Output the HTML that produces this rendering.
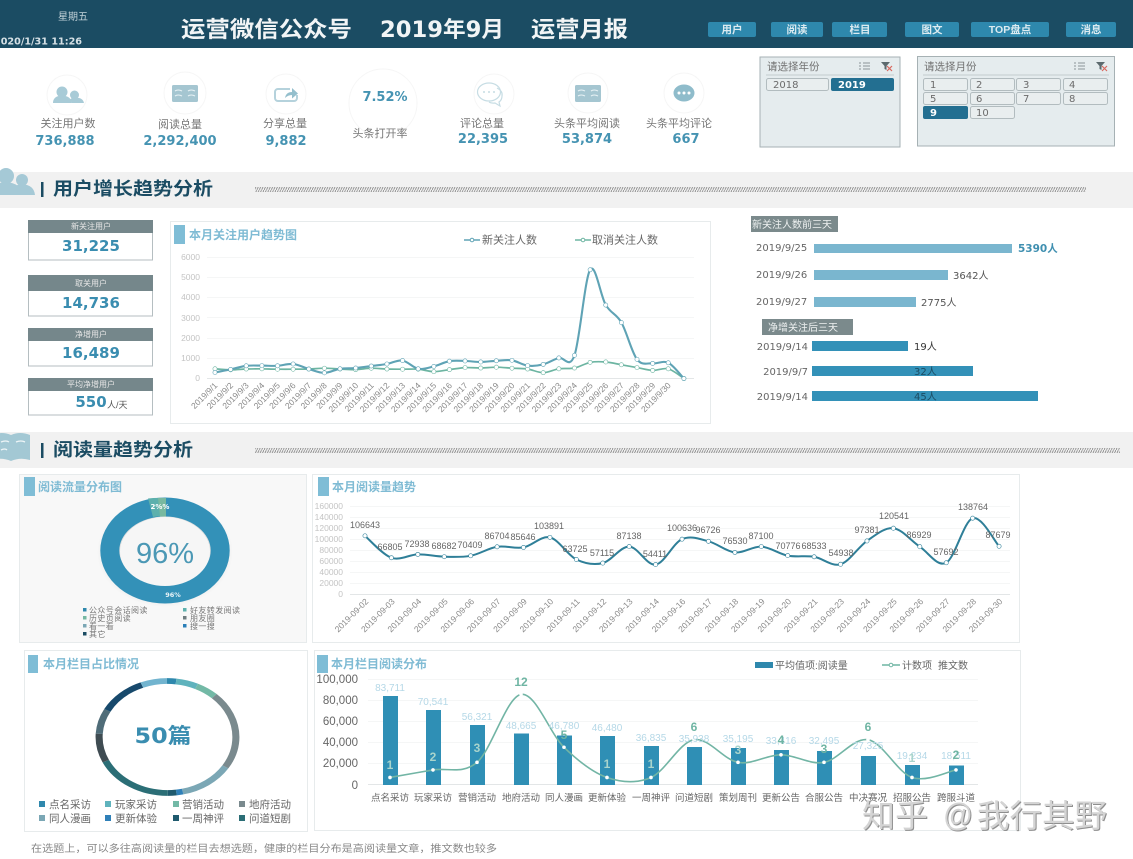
<!DOCTYPE html>
<html lang="zh"><head><meta charset="utf-8"><title>运营月报</title>
<style>
html,body{margin:0;padding:0;background:#fff;width:1133px;height:859px;overflow:hidden}
svg{display:block;filter:blur(.35px)}
text{font-family:"DejaVu Sans","Noto Sans CJK SC",sans-serif}
.cn{font-family:"Liberation Sans","Noto Sans CJK SC",sans-serif}
.lab{font-family:"Liberation Sans","Noto Sans CJK SC",sans-serif;font-size:11px;fill:#777;text-anchor:middle}
.val{font-size:13px;font-weight:bold;fill:#4593b2;text-anchor:middle}
.btn{font-family:"Liberation Sans","Noto Sans CJK SC",sans-serif;font-size:10.5px;font-weight:bold;fill:#dcebf1;text-anchor:middle}
.sec{font-family:"Liberation Sans","Noto Sans CJK SC",sans-serif;font-size:18px;font-weight:bold;fill:#1b4c63}
.pt{font-family:"Liberation Sans","Noto Sans CJK SC",sans-serif;font-size:12px;font-weight:bold;fill:#7fbbd4}
.kh{font-family:"Liberation Sans","Noto Sans CJK SC",sans-serif;font-size:8px;fill:#e6e6e6;text-anchor:middle}
.kv{font-size:15px;font-weight:bold;fill:#3a8db0;text-anchor:middle}
.ax{font-family:"Liberation Sans",sans-serif;font-size:8.5px;fill:#c4c4c4;text-anchor:end}
.rl{font-family:"Liberation Sans",sans-serif;font-size:8.5px;fill:#8a8a8a;text-anchor:end}
.d2{font-family:"Liberation Sans",sans-serif;font-size:9px;fill:#666;text-anchor:middle}
.sb{font-size:9.5px;fill:#666}
.rb{font-size:10px;fill:#666}
.rv{font-size:10px;fill:#555}
.lg8{font-family:"Liberation Sans","Noto Sans CJK SC",sans-serif;font-size:8px;fill:#777}
.lg11{font-family:"Liberation Sans","Noto Sans CJK SC",sans-serif;font-size:10.5px;fill:#666}
.v5{font-family:"Liberation Sans",sans-serif;font-size:10px;fill:#b5d8e7;text-anchor:middle}
.c5{font-family:"Liberation Sans",sans-serif;font-size:12px;font-weight:bold;fill:#6fb5a3;text-anchor:middle}
.x5{font-family:"Liberation Sans","Noto Sans CJK SC",sans-serif;font-size:9.5px;fill:#666;text-anchor:middle}
.y5{font-family:"Liberation Sans",sans-serif;font-size:11.5px;fill:#666;text-anchor:end}
.wm{font-family:"Liberation Sans","Noto Sans CJK SC",sans-serif;font-size:32px;fill:#d4d4d4;filter:drop-shadow(1px 1px 0 #8f8f8f)}
</style></head><body>
<svg width="1133" height="859" viewBox="0 0 1133 859" xmlns="http://www.w3.org/2000/svg">
<defs>
<pattern id="h" patternUnits="userSpaceOnUse" width="2.4" height="5"><path d="M0 5L2.4 0" stroke="#7a7a7a" stroke-width=".8"/></pattern>
<radialGradient id="sh" cx=".5" cy=".5" r=".5"><stop offset=".72" stop-color="#ddd"/><stop offset="1" stop-color="#f8f8f8"/></radialGradient>
</defs>
<rect width="1133" height="859" fill="#fff"/>

<!-- header -->
<rect width="1133" height="48" fill="#1b4c63"/>
<text x="58" y="20" class="cn" font-size="10" fill="#c2d2d9">星期五</text>
<text x="-6" y="44.500" font-size="9.500" font-weight="bold" fill="#d5e0e5" textLength="88" lengthAdjust="spacingAndGlyphs">2020/1/31 11:26</text>
<text x="181" y="37" class="cn" font-size="22" font-weight="bold" fill="#f2f5f6" textLength="171" lengthAdjust="spacingAndGlyphs">运营微信公众号</text>
<text x="380" y="37" class="cn" font-size="22" font-weight="bold" fill="#f2f5f6" textLength="124" lengthAdjust="spacingAndGlyphs" style="font-family:'DejaVu Sans','Noto Sans CJK SC',sans-serif">2019年9月</text>
<text x="531" y="37" class="cn" font-size="22" font-weight="bold" fill="#f2f5f6" textLength="97" lengthAdjust="spacingAndGlyphs">运营月报</text>
<g fill="#2e88ad">
<rect x="708" y="22" width="48" height="15" rx="2"/><rect x="771" y="22" width="52" height="15" rx="2"/><rect x="832" y="22" width="55" height="15" rx="2"/><rect x="905" y="22" width="54" height="15" rx="2"/><rect x="971" y="22" width="78" height="15" rx="2"/><rect x="1066" y="22" width="50" height="15" rx="2"/>
</g>
<text x="732" y="33" class="btn">用户</text><text x="797" y="33" class="btn">阅读</text><text x="860" y="33" class="btn">栏目</text><text x="932" y="33" class="btn">图文</text><text x="1010" y="33" class="btn">TOP盘点</text><text x="1091" y="33" class="btn">消息</text>

<!-- KPI icons -->
<g fill="none" stroke="#f6f6f6"><circle cx="67" cy="95" r="20"/><circle cx="185" cy="93" r="21"/><circle cx="286" cy="94" r="20"/><circle cx="383" cy="103" r="34"/><circle cx="494" cy="94" r="20"/><circle cx="588" cy="93" r="20"/><circle cx="684" cy="93" r="20"/></g>
<g fill="#a8cbd7"><circle cx="62" cy="92" r="5.500"/><path d="M53 103q0-7 9-7.500q9 .5 10 7.500z"/><circle cx="74.500" cy="95" r="4.500"/><path d="M72 103q0-1-2-3.500q2-2 5-2q8 0 9 5.500z"/></g>
<g><rect x="172" y="85" width="26" height="17" rx="1.500" fill="#a5c6d1"/><path d="M175 91q3-2 7 0M175 96q3-2 7 0M188 91q3-2 7 0M188 96q3-2 7 0" stroke="#e8f2f5" stroke-width="1.100" fill="none"/></g>
<g><path d="M290 89h-12a3 3 0 0 0-3 3v6a3 3 0 0 0 3 3h16a3 3 0 0 0 3-3v-3" fill="none" stroke="#b5d2dc" stroke-width="2"/><path d="M285 98q1-6 7-6v-4l6 5.500-6 5v-3.500q-4 0-7 3z" fill="#94bfcd"/></g>
<g fill="none" stroke="#c7dde4" stroke-width="1.200"><ellipse cx="489" cy="92" rx="11.500" ry="9"/><path d="M497 88q6 3 5 8q0 4-3 6l1 4-5-3q-4 .5-6-1"/></g>
<g fill="#c7dde4"><circle cx="484" cy="92" r="1"/><circle cx="489" cy="92" r="1"/><circle cx="494" cy="92" r="1"/></g>
<g><rect x="575" y="85" width="26" height="17" rx="1.500" fill="#a5c6d1"/><path d="M578 91q3-2 7 0M578 96q3-2 7 0M591 91q3-2 7 0M591 96q3-2 7 0" stroke="#e8f2f5" stroke-width="1.100" fill="none"/></g>
<g><ellipse cx="684" cy="93" rx="10.500" ry="8.500" fill="#8fbccb"/><circle cx="679" cy="93" r="1.500" fill="#fff"/><circle cx="684" cy="93" r="1.500" fill="#fff"/><circle cx="689" cy="93" r="1.500" fill="#fff"/></g>

<text x="68" y="127" class="lab">关注用户数</text><text x="180" y="128" class="lab">阅读总量</text><text x="285" y="127" class="lab">分享总量</text><text x="380" y="137" class="lab">头条打开率</text><text x="482" y="127" class="lab">评论总量</text><text x="587" y="127" class="lab">头条平均阅读</text><text x="679" y="127" class="lab">头条平均评论</text>
<text x="65" y="145" class="val">736,888</text><text x="180" y="145" class="val">2,292,400</text><text x="286" y="145" class="val">9,882</text><text x="385" y="101" class="val">7.52%</text><text x="483" y="143" class="val">22,395</text><text x="587" y="143" class="val">53,874</text><text x="686" y="143" class="val">667</text>

<!-- slicers -->
<rect x="760" y="57" width="140" height="90" fill="#e5ecee" stroke="#a6b1b4"/>
<rect x="917.500" y="56.500" width="197" height="89.500" fill="#e5ecee" stroke="#a6b1b4"/>
<text x="767" y="70" class="cn" font-size="10.500" fill="#707070">请选择年份</text><text x="924" y="70" class="cn" font-size="10.500" fill="#707070">请选择月份</text>
<path d="M766 75h128M923 75h186" stroke="#c3cccf"/>
<path d="M859 63h2M859 66h2M859 69h2M863 63h7M863 66h7M863 69h7M1074 63h2M1074 66h2M1074 69h2M1078 63h7M1078 66h7M1078 69h7" stroke="#8a9598" fill="none"/>
<path d="M881 62h9l-3.500 4v4l-2-1v-3z" fill="#5c6a6e"/><path d="M887 66l5 5M892 66l-5 5" stroke="#d9695f" stroke-width="1.200"/>
<path d="M1096 62h9l-3.500 4v4l-2-1v-3z" fill="#5c6a6e"/><path d="M1102 66l5 5M1107 66l-5 5" stroke="#d9695f" stroke-width="1.200"/>
<g fill="#e9eeef" stroke="#b2bcbf">
<rect x="766.500" y="78.500" width="62" height="12" rx="2"/>
<rect x="923.500" y="78.500" width="44" height="12" rx="2"/><rect x="970.500" y="78.500" width="44" height="12" rx="2"/><rect x="1016.500" y="78.500" width="44" height="12" rx="2"/><rect x="1063.500" y="78.500" width="44" height="12" rx="2"/>
<rect x="923.500" y="92.500" width="44" height="12" rx="2"/><rect x="970.500" y="92.500" width="44" height="12" rx="2"/><rect x="1016.500" y="92.500" width="44" height="12" rx="2"/><rect x="1063.500" y="92.500" width="44" height="12" rx="2"/>
<rect x="970.500" y="106.500" width="44" height="12" rx="2"/>
</g>
<rect x="831" y="78" width="63" height="13" rx="2" fill="#236f91"/><rect x="923" y="106" width="45" height="13" rx="2" fill="#236f91"/>
<g>
<text x="773" y="88" font-size="10" fill="#6b6b6b">2018</text><text x="838" y="88" font-size="10" fill="#fff" font-weight="bold">2019</text>
<text x="930" y="88" font-size="10" fill="#6b6b6b">1</text><text x="976" y="88" font-size="10" fill="#6b6b6b">2</text><text x="1023" y="88" font-size="10" fill="#6b6b6b">3</text><text x="1069" y="88" font-size="10" fill="#6b6b6b">4</text>
<text x="930" y="102" font-size="10" fill="#6b6b6b">5</text><text x="976" y="102" font-size="10" fill="#6b6b6b">6</text><text x="1023" y="102" font-size="10" fill="#6b6b6b">7</text><text x="1069" y="102" font-size="10" fill="#6b6b6b">8</text>
<text x="930" y="116" font-size="10" fill="#fff" font-weight="bold">9</text><text x="976" y="116" font-size="10" fill="#6b6b6b">10</text>
</g>

<!-- section 1 -->
<rect y="172" width="1133" height="36" fill="#f1f1f1"/>
<g fill="#a5c9d6"><circle cx="6" cy="176" r="8"/><path d="M-10 195q0-12 16-13q15 1 16 13z"/><circle cx="22" cy="180" r="6"/><path d="M18 195q0-4-4-8q4-3 8-3q12 1 13 11z"/></g>
<rect x="41" y="182" width="2.500" height="15" fill="#1b4c63"/>
<text x="53" y="195" class="sec" textLength="160" lengthAdjust="spacingAndGlyphs">用户增长趋势分析</text>
<rect x="255" y="187" width="831" height="5" fill="url(#h)"/>

<!-- KPI boxes -->
<g fill="#fff" stroke="#b5bec1"><rect x="28.500" y="220.500" width="124" height="39.500"/><rect x="28.500" y="275.500" width="124" height="40.500"/><rect x="28.500" y="328.500" width="124" height="37.500"/><rect x="28.500" y="378.500" width="124" height="36.500"/></g>
<g fill="#75878b"><rect x="28" y="220" width="125" height="13"/><rect x="28" y="275" width="125" height="16"/><rect x="28" y="328" width="125" height="13"/><rect x="28" y="378" width="125" height="13"/></g>
<text x="91" y="229" class="kh">新关注用户</text><text x="91" y="286" class="kh">取关用户</text><text x="91" y="337" class="kh">净增用户</text><text x="91" y="387" class="kh">平均净增用户</text>
<text x="91" y="251" class="kv">31,225</text><text x="91" y="308" class="kv">14,736</text><text x="91" y="358" class="kv">16,489</text><text x="91" y="407" class="kv">550</text>
<text x="107" y="408" class="cn" font-size="9" fill="#555">人/天</text>

<!-- chart1 -->
<rect x="170.500" y="221.500" width="540" height="202" fill="#fff" stroke="#e7ebec"/>
<rect x="174" y="225" width="11" height="19" fill="#7fbdd6"/>
<text x="189" y="239" class="pt">本月关注用户趋势图</text>
<path d="M464 240h16" stroke="#5fa3b5" stroke-width="1.500"/><circle cx="472" cy="240" r="1.800" fill="#fff" stroke="#5fa3b5"/>
<path d="M575 240h16" stroke="#6db5a2" stroke-width="1.500"/><circle cx="583" cy="240" r="1.800" fill="#fff" stroke="#6db5a2"/>
<text x="482" y="243.500" class="cn" font-size="11" fill="#666">新关注人数</text><text x="592" y="243.500" class="cn" font-size="11" fill="#666">取消关注人数</text>
<g stroke="#f5f6f6"><path d="M207 257.500H694M207 277.500H694M207 297.500H694M207 317.500H694M207 338.500H694M207 358.500H694"/></g><path d="M207 378.500H694" stroke="#e3e6e7"/>
<text x="200" y="260" class="ax">6000</text><text x="200" y="280" class="ax">5000</text><text x="200" y="300" class="ax">4000</text><text x="200" y="321" class="ax">3000</text><text x="200" y="341" class="ax">2000</text><text x="200" y="361" class="ax">1000</text><text x="200" y="381" class="ax">0</text>
<g id="c1"></g>
<g>
<text class="rl" x="218" y="386" transform="rotate(-45 218 386)">2019/9/1</text><text class="rl" x="233.700" y="386" transform="rotate(-45 233.700 386)">2019/9/2</text><text class="rl" x="249.300" y="386" transform="rotate(-45 249.300 386)">2019/9/3</text><text class="rl" x="265" y="386" transform="rotate(-45 265 386)">2019/9/4</text><text class="rl" x="280.600" y="386" transform="rotate(-45 280.600 386)">2019/9/5</text><text class="rl" x="296.200" y="386" transform="rotate(-45 296.200 386)">2019/9/6</text><text class="rl" x="311.900" y="386" transform="rotate(-45 311.900 386)">2019/9/7</text><text class="rl" x="327.500" y="386" transform="rotate(-45 327.500 386)">2019/9/8</text><text class="rl" x="343.100" y="386" transform="rotate(-45 343.100 386)">2019/9/9</text><text class="rl" x="358.800" y="386" transform="rotate(-45 358.800 386)">2019/9/10</text><text class="rl" x="374.400" y="386" transform="rotate(-45 374.400 386)">2019/9/11</text><text class="rl" x="390" y="386" transform="rotate(-45 390 386)">2019/9/12</text><text class="rl" x="405.700" y="386" transform="rotate(-45 405.700 386)">2019/9/13</text><text class="rl" x="421.300" y="386" transform="rotate(-45 421.300 386)">2019/9/14</text><text class="rl" x="436.900" y="386" transform="rotate(-45 436.900 386)">2019/9/15</text><text class="rl" x="452.600" y="386" transform="rotate(-45 452.600 386)">2019/9/16</text><text class="rl" x="468.200" y="386" transform="rotate(-45 468.200 386)">2019/9/17</text><text class="rl" x="483.800" y="386" transform="rotate(-45 483.800 386)">2019/9/18</text><text class="rl" x="499.500" y="386" transform="rotate(-45 499.500 386)">2019/9/19</text><text class="rl" x="515.100" y="386" transform="rotate(-45 515.100 386)">2019/9/20</text><text class="rl" x="530.700" y="386" transform="rotate(-45 530.700 386)">2019/9/21</text><text class="rl" x="546.400" y="386" transform="rotate(-45 546.400 386)">2019/9/22</text><text class="rl" x="562" y="386" transform="rotate(-45 562 386)">2019/9/23</text><text class="rl" x="577.600" y="386" transform="rotate(-45 577.600 386)">2019/9/24</text><text class="rl" x="593.300" y="386" transform="rotate(-45 593.300 386)">2019/9/25</text><text class="rl" x="608.900" y="386" transform="rotate(-45 608.900 386)">2019/9/26</text><text class="rl" x="624.500" y="386" transform="rotate(-45 624.500 386)">2019/9/27</text><text class="rl" x="640.200" y="386" transform="rotate(-45 640.200 386)">2019/9/28</text><text class="rl" x="655.800" y="386" transform="rotate(-45 655.800 386)">2019/9/29</text><text class="rl" x="671.400" y="386" transform="rotate(-45 671.400 386)">2019/9/30</text>
</g>

<!-- right bars -->
<rect x="751" y="216" width="87" height="16" fill="#7b8a8c"/>
<text x="752" y="228" class="cn" font-size="10" fill="#eef1f1">新关注人数前三天</text>
<g fill="#7ab6cf"><rect x="814" y="244" width="198" height="9"/><rect x="814" y="270" width="134" height="10"/><rect x="814" y="297" width="102" height="10"/></g>
<text x="756" y="251" class="rb">2019/9/25</text><text x="756" y="278" class="rb">2019/9/26</text><text x="756" y="305" class="rb">2019/9/27</text>
<text x="1018" y="252" font-size="10.500" font-weight="bold" fill="#3f8fb0">5390人</text><text x="953" y="279" class="rv">3642人</text><text x="921" y="306" class="rv">2775人</text>
<rect x="762" y="319" width="91" height="16" fill="#7b8a8c"/>
<text x="768" y="331" class="cn" font-size="10" fill="#eef1f1">净增关注后三天</text>
<g fill="#3391b8"><rect x="812" y="341" width="96" height="10"/><rect x="812" y="366" width="161" height="10"/><rect x="812" y="391" width="226" height="10"/></g>
<text x="808" y="350" class="rb" text-anchor="end">2019/9/14</text><text x="808" y="375" class="rb" text-anchor="end">2019/9/7</text><text x="808" y="400" class="rb" text-anchor="end">2019/9/14</text>
<text x="914" y="350" class="rv" style="fill:#333">19人</text><text x="914" y="375" class="rv" style="fill:#1b4c63">32人</text><text x="914" y="400" class="rv" style="fill:#1b4c63">45人</text>

<!-- section 2 -->
<rect y="432" width="1133" height="36" fill="#f1f1f1"/>
<path d="M-8 435q10-4 19 0q9-4 19 0v25q-10-3-19 1q-9-4-19-1z" fill="#a3c8d4"/><path d="M1 442q5-2 8 0M16 442q5-2 9 0M1 450q4-2 6 0" stroke="#eef5f7" stroke-width="1.300" fill="none"/>
<rect x="41" y="443" width="2.500" height="15" fill="#1b4c63"/>
<text x="53" y="456" class="sec" textLength="140" lengthAdjust="spacingAndGlyphs">阅读量趋势分析</text>
<rect x="255" y="448" width="865" height="5" fill="url(#h)"/>

<!-- donut panel -->
<rect x="19.500" y="474.500" width="287" height="168" fill="#f8f8f8" stroke="#e7ebec"/>
<rect x="24" y="477" width="11" height="19" fill="#7fbdd6"/>
<text x="38" y="491" class="pt">阅读流量分布图</text>
<ellipse cx="165" cy="552" rx="68" ry="55" fill="url(#sh)"/>
<ellipse cx="165" cy="550.500" rx="55.200" ry="43.500" fill="none" stroke="#3391b8" stroke-width="19"/>
<path d="M148 498.500Q156 497.500 163 498L166 516Q158 516 153 517z" fill="#5db0ad"/>
<path d="M158 498Q162 497.700 166 498L166 516.500 160 516.500z" fill="#78b9a0"/>
<ellipse cx="165" cy="551.500" rx="45" ry="34.500" fill="#f6f6f6"/>
<text x="165" y="563" font-size="29" fill="#4b98b5" text-anchor="middle" style="font-family:'Liberation Sans',sans-serif">96%</text>
<text x="160" y="509" font-size="7" font-weight="bold" fill="#fff" text-anchor="middle">2%%</text>
<text x="173" y="597" font-size="6.500" font-weight="bold" fill="#e8f3f7" text-anchor="middle">96%</text>
<g><rect x="83" y="608" width="3.500" height="3.500" fill="#2f88ad"/><rect x="183" y="608" width="3.500" height="3.500" fill="#5db0ad"/><rect x="83" y="616" width="3.500" height="3.500" fill="#75b8a2"/><rect x="183" y="616" width="3.500" height="3.500" fill="#6f7d80"/><rect x="83" y="624" width="3.500" height="3.500" fill="#7ba7b5"/><rect x="183" y="624" width="3.500" height="3.500" fill="#2b7fb8"/><rect x="83" y="632" width="3.500" height="3.500" fill="#1b4c63"/></g>
<text x="89" y="613" class="lg8" letter-spacing=".4">公众号会话阅读</text><text x="190" y="613" class="lg8" letter-spacing=".4">好友转发阅读</text><text x="89" y="621" class="lg8" letter-spacing=".4">历史页阅读</text><text x="190" y="621" class="lg8" letter-spacing=".4">朋友圈</text><text x="89" y="629" class="lg8" letter-spacing=".4">看一看</text><text x="190" y="629" class="lg8" letter-spacing=".4">搜一搜</text><text x="89" y="637" class="lg8" letter-spacing=".4">其它</text>

<!-- chart2 -->
<rect x="312.500" y="474.500" width="707" height="168" fill="#fff" stroke="#e7ebec"/>
<rect x="318" y="477" width="11" height="19" fill="#7fbdd6"/>
<text x="332" y="491" class="pt">本月阅读量趋势</text>
<g stroke="#f5f6f6"><path d="M350 506.500H1010M350 517.500H1010M350 528.500H1010M350 539.500H1010M350 550.500H1010M350 561.500H1010M350 572.500H1010M350 583.500H1010"/></g><path d="M350 594.500H1010" stroke="#e3e6e7"/>
<text x="343" y="509" class="ax">160000</text><text x="343" y="520" class="ax">140000</text><text x="343" y="531" class="ax">120000</text><text x="343" y="542" class="ax">100000</text><text x="343" y="553" class="ax">80000</text><text x="343" y="564" class="ax">60000</text><text x="343" y="575" class="ax">40000</text><text x="343" y="586" class="ax">20000</text><text x="343" y="597" class="ax">0</text>
<g id="c2"></g>
<text x="365" y="528" class="d2">106643</text><text x="390" y="550" class="d2">66805</text><text x="417" y="547" class="d2">72938</text><text x="444" y="549" class="d2">68682</text><text x="470" y="548" class="d2">70409</text><text x="497" y="539" class="d2">86704</text><text x="523" y="540" class="d2">85646</text><text x="549" y="529" class="d2">103891</text><text x="575" y="552" class="d2">63725</text><text x="602" y="556" class="d2">57115</text><text x="629" y="539" class="d2">87138</text><text x="655" y="557" class="d2">54411</text><text x="682" y="531" class="d2">100636</text><text x="708" y="533" class="d2">96726</text><text x="735" y="544" class="d2">76530</text><text x="761" y="539" class="d2">87100</text><text x="788" y="549" class="d2">70776</text><text x="814" y="549" class="d2">68533</text><text x="841" y="556" class="d2">54938</text><text x="867" y="533" class="d2">97381</text><text x="894" y="519" class="d2">120541</text><text x="919" y="538" class="d2">86929</text><text x="946" y="555" class="d2">57692</text><text x="973" y="510" class="d2">138764</text><text x="998" y="538" class="d2">87679</text>
<text class="rl" x="369" y="602" transform="rotate(-45 369 602)">2019-09-02</text><text class="rl" x="395.400" y="602" transform="rotate(-45 395.400 602)">2019-09-03</text><text class="rl" x="421.800" y="602" transform="rotate(-45 421.800 602)">2019-09-04</text><text class="rl" x="448.300" y="602" transform="rotate(-45 448.300 602)">2019-09-05</text><text class="rl" x="474.700" y="602" transform="rotate(-45 474.700 602)">2019-09-06</text><text class="rl" x="501.100" y="602" transform="rotate(-45 501.100 602)">2019-09-07</text><text class="rl" x="527.500" y="602" transform="rotate(-45 527.500 602)">2019-09-09</text><text class="rl" x="553.900" y="602" transform="rotate(-45 553.900 602)">2019-09-10</text><text class="rl" x="580.400" y="602" transform="rotate(-45 580.400 602)">2019-09-11</text><text class="rl" x="606.800" y="602" transform="rotate(-45 606.800 602)">2019-09-12</text><text class="rl" x="633.200" y="602" transform="rotate(-45 633.200 602)">2019-09-13</text><text class="rl" x="659.600" y="602" transform="rotate(-45 659.600 602)">2019-09-14</text><text class="rl" x="686" y="602" transform="rotate(-45 686 602)">2019-09-16</text><text class="rl" x="712.500" y="602" transform="rotate(-45 712.500 602)">2019-09-17</text><text class="rl" x="738.900" y="602" transform="rotate(-45 738.900 602)">2019-09-18</text><text class="rl" x="765.300" y="602" transform="rotate(-45 765.300 602)">2019-09-19</text><text class="rl" x="791.700" y="602" transform="rotate(-45 791.700 602)">2019-09-20</text><text class="rl" x="818.100" y="602" transform="rotate(-45 818.100 602)">2019-09-21</text><text class="rl" x="844.600" y="602" transform="rotate(-45 844.600 602)">2019-09-23</text><text class="rl" x="871" y="602" transform="rotate(-45 871 602)">2019-09-24</text><text class="rl" x="897.400" y="602" transform="rotate(-45 897.400 602)">2019-09-25</text><text class="rl" x="923.800" y="602" transform="rotate(-45 923.800 602)">2019-09-26</text><text class="rl" x="950.200" y="602" transform="rotate(-45 950.200 602)">2019-09-27</text><text class="rl" x="976.700" y="602" transform="rotate(-45 976.700 602)">2019-09-28</text><text class="rl" x="1003" y="602" transform="rotate(-45 1003 602)">2019-09-30</text>

<!-- ring panel -->
<rect x="24.500" y="650.500" width="283" height="181" fill="#fff" stroke="#e7ebec"/>
<rect x="28" y="655" width="10" height="18" fill="#7fbdd6"/>
<text x="43" y="668" class="pt">本月栏目占比情况</text>
<g transform="translate(167.500 737) scale(1.140 .933) rotate(-90)" fill="none" stroke-width="6.200">
<circle r="60" pathLength="100" stroke="#2e88ad" stroke-dasharray="2 98" stroke-dashoffset="0"/>
<circle r="60" pathLength="100" stroke="#5fb3bd" stroke-dasharray="5 95" stroke-dashoffset="-2"/>
<circle r="60" pathLength="100" stroke="#73b9a6" stroke-dasharray="5 95" stroke-dashoffset="-7"/>
<circle r="60" pathLength="100" stroke="#7a8a8e" stroke-dasharray="22 78" stroke-dashoffset="-12"/>
<circle r="60" pathLength="100" stroke="#7ba7b5" stroke-dasharray="12.500 87.500" stroke-dashoffset="-34"/>
<circle r="60" pathLength="100" stroke="#2f80b8" stroke-dasharray="1.500 98.500" stroke-dashoffset="-46.500"/>
<circle r="60" pathLength="100" stroke="#1f5a6e" stroke-dasharray="2 98" stroke-dashoffset="-48"/>
<circle r="60" pathLength="100" stroke="#2b6e76" stroke-dasharray="18 82" stroke-dashoffset="-50"/>
<circle r="60" pathLength="100" stroke="#3f4c52" stroke-dasharray="8 92" stroke-dashoffset="-68"/>
<circle r="60" pathLength="100" stroke="#4f6c78" stroke-dasharray="7 93" stroke-dashoffset="-76"/>
<circle r="60" pathLength="100" stroke="#17496c" stroke-dasharray="11 89" stroke-dashoffset="-83"/>
<circle r="60" pathLength="100" stroke="#72b4cf" stroke-dasharray="6 94" stroke-dashoffset="-94"/>
</g>
<text x="163" y="743" font-size="21" font-weight="bold" fill="#3a8db0" text-anchor="middle" textLength="57" lengthAdjust="spacingAndGlyphs">50篇</text>
<g><rect x="39" y="801" width="6" height="6" fill="#2f88ad"/><rect x="105" y="801" width="6" height="6" fill="#5fb3bd"/><rect x="173" y="801" width="6" height="6" fill="#73b9a6"/><rect x="239" y="801" width="6" height="6" fill="#7a8a8e"/><rect x="39" y="815" width="6" height="6" fill="#7ba7b5"/><rect x="105" y="815" width="6" height="6" fill="#2f80b8"/><rect x="173" y="815" width="6" height="6" fill="#1f5a6e"/><rect x="239" y="815" width="6" height="6" fill="#2b6e76"/></g>
<text x="49" y="808" class="lg11">点名采访</text><text x="115" y="808" class="lg11">玩家采访</text><text x="182" y="808" class="lg11">营销活动</text><text x="249" y="808" class="lg11">地府活动</text><text x="49" y="822" class="lg11">同人漫画</text><text x="115" y="822" class="lg11">更新体验</text><text x="182" y="822" class="lg11">一周神评</text><text x="249" y="822" class="lg11">问道短剧</text>

<!-- chart5 -->
<rect x="314.500" y="650.500" width="706" height="180" fill="#fff" stroke="#e7ebec"/>
<rect x="317" y="655" width="11" height="18" fill="#7fbdd6"/>
<text x="331" y="668" class="pt">本月栏目阅读分布</text>
<rect x="755" y="662" width="18" height="6" fill="#2f88ad"/>
<text x="775" y="669" class="cn" font-size="10" fill="#666">平均值项:阅读量</text>
<path d="M882 665h18" stroke="#6fb5a3" stroke-width="1.500"/><circle cx="891" cy="665" r="1.800" fill="#fff" stroke="#6fb5a3"/>
<text x="902" y="669" class="cn" font-size="10" fill="#666">计数项</text><text x="938" y="669" class="cn" font-size="10" fill="#666">推文数</text>
<g stroke="#f5f6f6"><path d="M368 679.500H978M368 700.500H978M368 721.500H978M368 742.500H978M368 763.500H978"/></g><path d="M368 784.500H978" stroke="#e3e6e7"/>
<text x="358" y="683" class="y5">100,000</text><text x="358" y="704" class="y5">80,000</text><text x="358" y="725" class="y5">60,000</text><text x="358" y="746" class="y5">40,000</text><text x="358" y="767" class="y5">20,000</text><text x="358" y="789" class="y5">0</text>
<g fill="#2f8fb5">
<rect x="383" y="696" width="15" height="89"/><rect x="426" y="710" width="15" height="75"/><rect x="470" y="725" width="15" height="60"/><rect x="514" y="733.500" width="15" height="51.500"/><rect x="557" y="735.500" width="15" height="49.500"/><rect x="600" y="736" width="15" height="49"/><rect x="644" y="746" width="15" height="39"/><rect x="687" y="747" width="15" height="38"/><rect x="731" y="748" width="15" height="37"/><rect x="774" y="750" width="15" height="35"/><rect x="817" y="751" width="15" height="34"/><rect x="861" y="756" width="15" height="29"/><rect x="905" y="765" width="15" height="20"/><rect x="949" y="765.500" width="15" height="19.500"/>
</g>
<g id="c5"></g>
<text x="390" y="691" class="v5">83,711</text><text x="433" y="705" class="v5">70,541</text><text x="477" y="720" class="v5">56,321</text><text x="521" y="729" class="v5">48,665</text><text x="564" y="729" class="v5">46,780</text><text x="607" y="731" class="v5">46,480</text><text x="651" y="741" class="v5">36,835</text><text x="694" y="742" class="v5">35,938</text><text x="738" y="742" class="v5">35,195</text><text x="781" y="744" class="v5">33,416</text><text x="824" y="744" class="v5">32,495</text><text x="868" y="749" class="v5">27,325</text><text x="912" y="759" class="v5">19,234</text><text x="956" y="759" class="v5">18,511</text>
<text x="390" y="769" class="c5" style="fill:#a9d4cc">1</text><text x="433" y="761" class="c5" style="fill:#a9d4cc">2</text><text x="477" y="752" class="c5" style="fill:#a9d4cc">3</text><text x="521" y="686" class="c5">12</text><text x="564" y="739" class="c5">5</text><text x="607" y="768" class="c5" style="fill:#a9d4cc">1</text><text x="651" y="768" class="c5" style="fill:#a9d4cc">1</text><text x="694" y="731" class="c5">6</text><text x="738" y="754" class="c5" style="fill:#a9d4cc">3</text><text x="781" y="744" class="c5">4</text><text x="824" y="753" class="c5">3</text><text x="868" y="731" class="c5">6</text><text x="912" y="762" class="c5" style="fill:#a9d4cc">1</text><text x="956" y="759" class="c5">2</text>
<text x="390" y="801" class="x5">点名采访</text><text x="433" y="801" class="x5">玩家采访</text><text x="477" y="801" class="x5">营销活动</text><text x="521" y="801" class="x5">地府活动</text><text x="564" y="801" class="x5">同人漫画</text><text x="607" y="801" class="x5">更新体验</text><text x="651" y="801" class="x5">一周神评</text><text x="694" y="801" class="x5">问道短剧</text><text x="738" y="801" class="x5">策划周刊</text><text x="781" y="801" class="x5">更新公告</text><text x="824" y="801" class="x5">合服公告</text><text x="868" y="801" class="x5">中决赛况</text><text x="912" y="801" class="x5">招服公告</text><text x="956" y="801" class="x5">跨服斗道</text>

<text x="31" y="852" class="cn" font-size="10" fill="#888" textLength="466" lengthAdjust="spacingAndGlyphs">在选题上，可以多往高阅读量的栏目去想选题，健康的栏目分布是高阅读量文章，推文数也较多</text>

<text x="862" y="827" class="wm" textLength="66" lengthAdjust="spacingAndGlyphs">知乎</text>
<text x="943" y="826" class="wm" textLength="30" lengthAdjust="spacingAndGlyphs">@</text>
<text x="977" y="827" class="wm" textLength="130" lengthAdjust="spacingAndGlyphs">我行其野</text>
</svg>
<script>
function cr(p){var d='M'+p[0][0]+' '+p[0][1];for(var i=0;i<p.length-1;i++){var a=p[i-1]||p[i],b=p[i],c=p[i+1],e=p[i+2]||c;d+='C'+(b[0]+(c[0]-a[0])/6).toFixed(1)+' '+(b[1]+(c[1]-a[1])/6).toFixed(1)+' '+(c[0]-(e[0]-b[0])/6).toFixed(1)+' '+(c[1]-(e[1]-b[1])/6).toFixed(1)+' '+c[0].toFixed(1)+' '+c[1].toFixed(1);}return d;}
function draw(id,p,col,w,r,fill){var g=document.getElementById(id),n='http://www.w3.org/2000/svg',a=document.createElementNS(n,'path');a.setAttribute('d',cr(p));a.setAttribute('fill','none');a.setAttribute('stroke',col);a.setAttribute('stroke-width',w);g.appendChild(a);p.forEach(function(q){var c=document.createElementNS(n,'circle');c.setAttribute('cx',q[0]);c.setAttribute('cy',q[1]);c.setAttribute('r',r);c.setAttribute('fill','#fff');if(fill!==0){c.setAttribute('stroke',col);c.setAttribute('stroke-width','.6');}g.appendChild(c);});}
var a1=[300,450,630,640,630,720,470,280,480,520,620,720,890,480,600,860,870,820,880,900,640,700,1020,1150,5390,3642,2775,950,750,780,0];
var a2=[480,430,470,480,460,460,470,510,470,440,510,470,460,460,340,440,540,520,560,510,470,290,480,520,800,820,680,540,400,480,0];
function m1(v,i){return [215+15.63*i,378.5-v*.02017];}
draw('c1',a2.map(m1),'#6db5a2',1.7,2.1);
draw('c1',a1.map(m1),'#5fa3b5',2.1,2.1);
var b=[106643,66805,72938,68682,70409,86704,85646,103891,63725,57115,87138,54411,100636,96726,76530,87100,70776,68533,54938,97381,120541,86929,57692,138764,87679];
draw('c2',b.map(function(v,i){return [365+26.42*i,594.5-v*88/160000];}),'#2f7f98',2,2.1);
var n5=[1,2,3,12,5,1,1,6,3,4,3,6,1,2],x5=[390,433,477,521,564,607,651,694,738,781,824,868,912,956];
draw('c5',n5.map(function(v,i){return [x5[i],785-7.55*v];}),'#72b5a5',1.6,1.8,0);
</script>
</body></html>
